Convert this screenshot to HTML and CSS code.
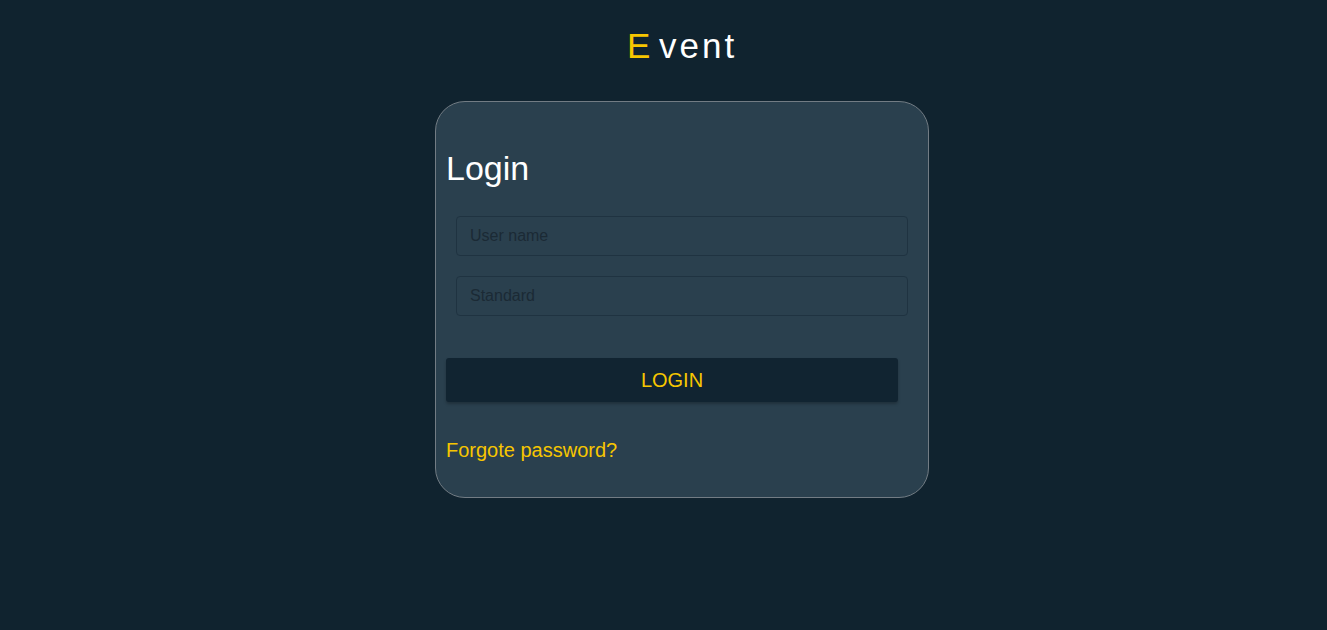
FILE: index.html
```html
<!DOCTYPE html>
<html lang="en">
<head>
<meta charset="utf-8">
<title>Event - Login</title>
<link rel="stylesheet" href="styles.css">
</head>
<body>
<div class="page">
  <div class="brand"><span class="brand-e">E</span> vent</div>
  <form class="card">
    <h1 class="card-title">Login</h1>
    <input class="field" type="text" placeholder="User name">
    <input class="field field-second" type="password" placeholder="Standard">
    <button class="login-btn" type="button">LOGIN</button>
    <a class="forgot" href="#">Forgote password?</a>
  </form>
</div>
</body>
</html>
```
FILE: styles.css
```css
* { box-sizing: border-box; }
html, body {
  margin: 0;
  padding: 0;
  background: #10232f;
  font-family: "Liberation Sans", Arial, sans-serif;
}
.page {
  display: flex;
  flex-direction: column;
  align-items: center;
  min-height: 630px;
  padding-left: 37px;
}
.brand {
  margin-top: 26px;
  font-size: 35px;
  line-height: 39px;
  letter-spacing: 3px;
  word-spacing: -7px;
  color: #ffffff;
}
.brand-e { color: #f7c600; }
.card {
  margin-top: 36px;
  width: 494px;
  display: flex;
  flex-direction: column;
  align-items: flex-start;
  background: #2a404e;
  border: 1px solid #727c84;
  border-radius: 30px;
  padding: 47px 10px 35px 10px;
}
.card-title {
  margin: 0;
  font-size: 34px;
  line-height: 39px;
  font-weight: normal;
  color: #ffffff;
}
.field {
  margin: 28px 0 0 10px;
  width: 452px;
  height: 40px;
  padding: 0 13px;
  background: transparent;
  border: 1px solid #1f3341;
  border-radius: 4px;
  font-family: "Liberation Sans", Arial, sans-serif;
  font-size: 16px;
  color: #1c2b36;
  outline: none;
}
.field::placeholder { color: #1b2a35; }
.field-second { margin-top: 20px; }
.login-btn {
  margin-top: 42px;
  width: 452px;
  height: 44px;
  background: #112431;
  border: none;
  border-radius: 3px;
  box-shadow: 0 2px 3px rgba(0, 0, 0, 0.25);
  color: #f7c600;
  font-family: "Liberation Sans", Arial, sans-serif;
  font-size: 20px;
  cursor: pointer;
}
.forgot {
  margin-top: 37px;
  font-size: 20px;
  line-height: 23px;
  color: #f7c600;
  text-decoration: none;
}
```
